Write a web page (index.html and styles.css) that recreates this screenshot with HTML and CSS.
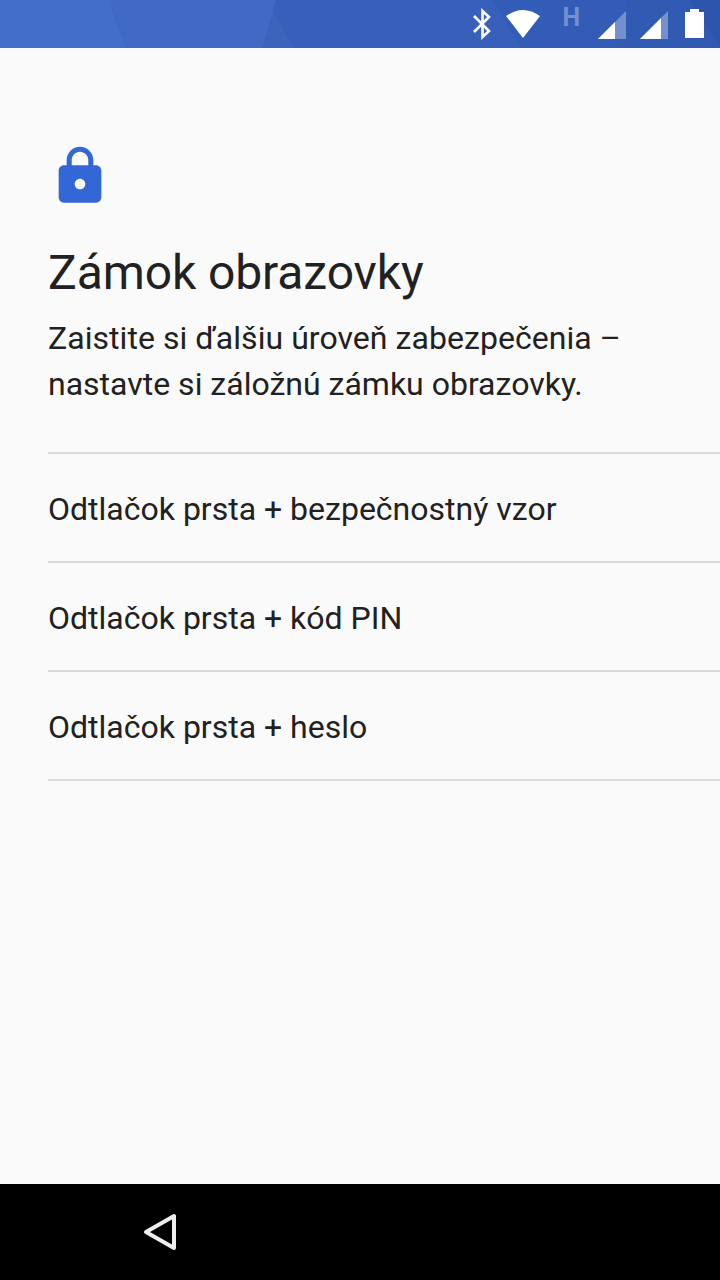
FILE: index.html
```html
<!DOCTYPE html>
<html lang="sk">
<head>
  <meta charset="UTF-8">
  <title>Zámok obrazovky</title>
  <link rel="stylesheet" href="styles.css">
</head>
<body>
  <!-- Status bar -->
  <div class="status-bar">
    <svg class="status-bg" width="720" height="48" viewBox="0 0 720 48">
      <path fill="#446fc9" d="M0 0h109l17 48H0z"/>
      <path fill="#406ac3" d="M109 0h167l-13 48H126z"/>
      <path fill="#3b64bd" d="M273 11l22 37h-32z"/>
      <path fill="#3660b9" d="M276 0h217l28 48H295L273 11z"/>
      <path fill="#335cb6" d="M493 0h135l-12 48h-95z"/>
      <path fill="#315ab3" d="M628 0h62l30 48H616z"/>
      <path fill="#2c55ae" d="M690 0h30v48z"/>
    </svg>
    <svg class="status-icons" width="720" height="48" viewBox="0 0 720 48">
      <path fill="none" stroke="#fff" stroke-width="2.600" d="M474 16l15 15-6.500 6V11l6.500 6-15 15"/>
      <path fill="#fff" d="M506 16q17-12 34 0l-17 22z"/>
      <text class="network" x="562.500" y="26">H</text>
      <path fill="#7490ce" d="M626 11v28h-28z"/>
      <path fill="#fff" d="M615 22v17h-17z"/>
      <path fill="#7490ce" d="M668 11v28h-28z"/>
      <path fill="#fff" d="M661 18v21h-21z"/>
      <path fill="#fff" d="M690 9h9v3h5v26h-19V12h5z"/>
    </svg>
  </div>

  <!-- Screen lock setup -->
  <main class="content">
    <svg class="lock" width="64" height="64" viewBox="0 0 24 24">
      <path d="M18 8h-1V6c0-2.760-2.240-5-5-5S7 3.240 7 6v2H6c-1.100 0-2 .9-2 2v10c0 1.100.9 2 2 2h12c1.100 0 2-.9 2-2V10c0-1.100-.9-2-2-2zm-6 9c-1.100 0-2-.9-2-2s.9-2 2-2 2 .9 2 2-.9 2-2 2zm3.100-9H8.900V6c0-1.710 1.390-3.100 3.100-3.100s3.100 1.390 3.100 3.100v2z"/>
    </svg>
    <h1>Zámok obrazovky</h1>
    <p><span class="first-line">Zaistite si ďalšiu úroveň zabezpečenia –</span><br>nastavte si záložnú zámku obrazovky.</p>
    <ul class="options">
      <li>Odtlačok prsta + bezpečnostný vzor</li>
      <li>Odtlačok prsta + kód PIN</li>
      <li>Odtlačok prsta + heslo</li>
    </ul>
  </main>

  <!-- Navigation bar -->
  <div class="nav-bar">
    <svg width="40" height="44" viewBox="0 0 40 44">
      <path d="M34 6v32L6 22z"/>
    </svg>
  </div>
</body>
</html>
```
FILE: styles.css
```css
body {
  margin: 0;
  height: 1280px;
  display: flex;
  flex-direction: column;
  background-color: #fafafa;
  color: #212121;
  font-family: Roboto, sans-serif;
}
.status-bar {
  display: grid;
  height: 48px;
  background-color: #345bb5;
}
.status-bg,
.status-icons {
  grid-area: 1 / 1;
}
.network {
  fill: #7490ce;
  font-size: 25px;
  font-weight: bold;
}
.content {
  flex: 1;
  padding: 96px 0 0 48px;
}
.lock {
  display: block;
  fill: #3367d6;
}
h1 {
  margin: 33px 0 0;
  font-size: 48px;
  line-height: 64px;
  font-weight: normal;
  letter-spacing: -0.1px;
}
p {
  margin: 10px 0 0;
  font-size: 32px;
  line-height: 46px;
}
.first-line {
  letter-spacing: 0.05px;
}
.options {
  margin: 45px 0 0;
  padding: 0;
  list-style: none;
  border-top: 2px solid #dadada;
}
.options li {
  height: 107px;
  border-bottom: 2px solid #dadada;
  font-size: 32px;
  line-height: 110px;
}
.nav-bar {
  height: 96px;
  display: flex;
  align-items: center;
  padding-left: 140px;
  background-color: #000;
}
.nav-bar path {
  fill: none;
  stroke: #eee;
  stroke-width: 4;
  stroke-linejoin: round;
}
```
